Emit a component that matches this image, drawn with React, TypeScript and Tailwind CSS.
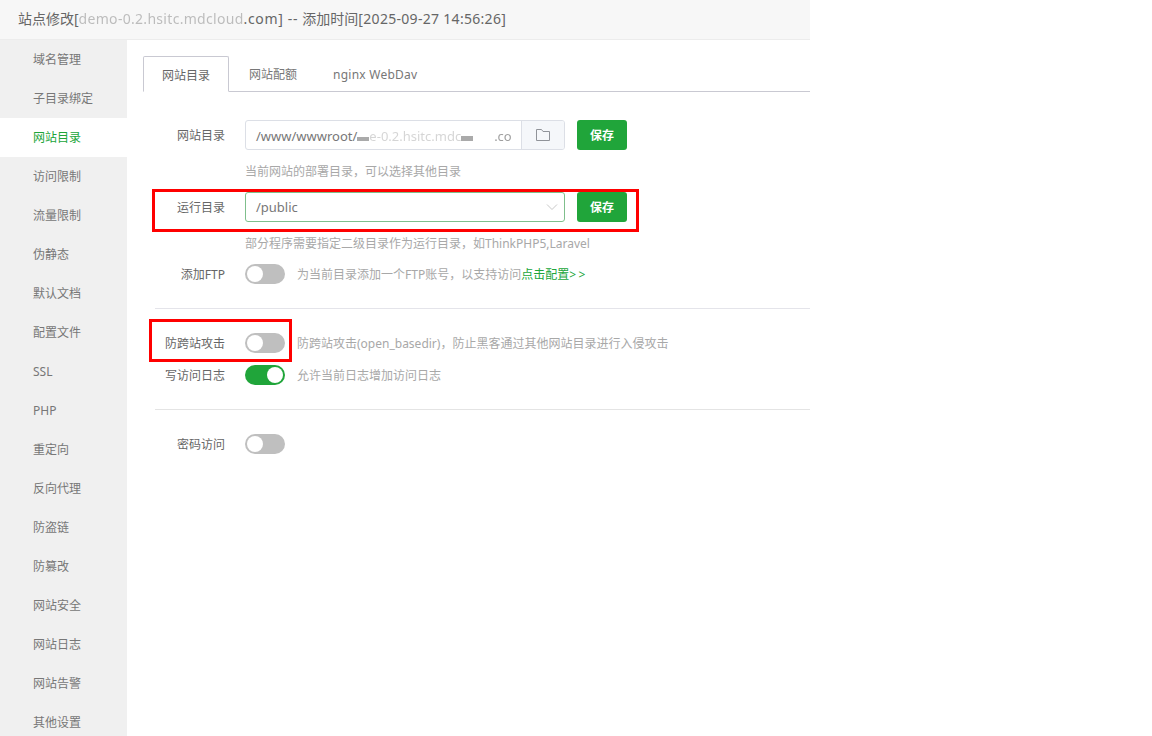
import { ReactNode } from "react";

const fontStack = 'font-["Noto_Sans","Noto_Sans_CJK_SC",sans-serif]';

const menuItems = [
  "域名管理", "子目录绑定", "网站目录", "访问限制", "流量限制", "伪静态",
  "默认文档", "配置文件", "SSL", "PHP", "重定向", "反向代理",
  "防盗链", "防篡改", "网站安全", "网站日志", "网站告警", "其他设置",
];

const Toggle = ({ on = false }: { on?: boolean }) => (
  <div className={`w-10 h-5 rounded-full p-[2px] flex shrink-0 ${on ? "bg-[#20a53a] justify-end" : "bg-[#bfbfbf] justify-start"}`}>
    <div className="w-4 h-4 rounded-full bg-white" />
  </div>
);

const SaveButton = () => (
  <button className="ml-3 w-[50px] h-[30px] pt-[2px] rounded-[3px] bg-[#20a53a] text-white text-xs font-bold shrink-0">保存</button>
);

const Label = ({ children }: { children: ReactNode }) => (
  <div className="w-[90px] pr-5 pt-[2px] text-right text-xs text-[#666] shrink-0 whitespace-nowrap">{children}</div>
);

const Hint = ({ children }: { children: ReactNode }) => (
  <div className="ml-[90px] text-xs leading-5 text-[#a8a8a8]">{children}</div>
);

const ToggleNote = ({ children }: { children: ReactNode }) => (
  <div className="ml-3 pt-[2px] text-xs text-[#a8a8a8] whitespace-nowrap">{children}</div>
);

const App = () => {
  return (
    <div className={`w-[1152px] h-[736px] overflow-hidden bg-white relative ${fontStack}`}>
      <div className="w-[810px]">
        {/* Header */}
        <div className="h-10 bg-[#f7f7f7] border-b border-[#ececec] pl-[18px] text-sm leading-[38px] text-[#666] whitespace-nowrap">
          站点修改[<span className="opacity-40 blur-[0.5px] tracking-[0.3px]">demo-0.2.hsitc.mdcloud</span>
          <span className="tracking-[0.65px]">.com] -- </span>添加时间<span className="tracking-[0.3px]">[2025-09-27 14:56:26]</span>
        </div>

        <div className="flex h-[696px]">
          {/* Sidebar */}
          <div className="w-[127px] bg-[#f0f0f0] shrink-0 overflow-hidden">
            {menuItems.map((item) => (
              <div
                key={item}
                className={`h-[39px] pl-[33px] text-xs leading-[39px] ${item === "网站目录" ? "bg-white text-[#20a53a]" : "text-[#777]"}`}
              >
                {item}
              </div>
            ))}
          </div>

          {/* Content */}
          <div className="flex-1 pl-4 pt-4">
            <div className="flex h-9 border-b border-[#c9c9d2] text-xs text-[#777]">
              <div className="w-[86px] h-9 border border-b-white border-[#c9c9d2] rounded-t-[2px] bg-white text-center leading-[37px] text-[#666]">网站目录</div>
              <div className="w-[88px] text-center leading-[37px]">网站配额</div>
              <div className="pl-4 leading-[37px] whitespace-nowrap tracking-[0.25px]">nginx WebDav</div>
            </div>

            <div className="pl-3 pt-7">
              <div className="flex items-center">
                <Label>网站目录</Label>
                <div className="w-80 h-[30px] flex border border-[#dcdfe6] rounded-[3px] overflow-hidden">
                  <div className="flex-1 pl-[10px] text-[13px] leading-[30px] text-[#777] whitespace-nowrap overflow-hidden">
                    /www/wwwroot/
                    <span className="inline-block w-3 h-1 bg-[#aaa] blur-[0.5px]" />
                    <span className="opacity-30 blur-[0.5px]">e-0.2.hsitc.mdc</span>
                    <span className="inline-block w-3 h-[5px] bg-[#aaa] blur-[0.5px]" />
                    <span className="inline-block w-[21px]" />
                    <span className="opacity-70">.co</span>
                  </div>
                  <div className="w-[43px] bg-[#f5f7fa] border-l border-[#dcdfe6] flex items-center justify-center">
                    <svg width="16" height="14" viewBox="0 0 16 14" fill="none" stroke="#909399" strokeWidth="1">
                      <path d="M1.5 12.5V1.5H6.5L8 3.5H14.5V12.5Z" />
                    </svg>
                  </div>
                </div>
                <SaveButton />
              </div>
              <div className="mt-3"><Hint>当前网站的部署目录，可以选择其他目录</Hint></div>

              <div className="flex items-center mt-[10px]">
                <Label>运行目录</Label>
                <div className="w-80 h-[30px] flex items-center justify-between border border-[#7fbf8c] rounded-[3px] pl-[10px] pr-[6px] text-[13px] text-[#777]">
                  <span className="pt-[2px]">/public</span>
                  <svg width="12" height="8" viewBox="0 0 12 8" fill="none" stroke="#c8c8c8" strokeWidth="1">
                    <path d="M1 1.5L6 6.5L11 1.5" />
                  </svg>
                </div>
                <SaveButton />
              </div>
              <div className="mt-3"><Hint>部分程序需要指定二级目录作为运行目录，如ThinkPHP5,Laravel</Hint></div>

              <div className="flex items-center mt-[10px]">
                <Label>添加FTP</Label>
                <Toggle />
                <ToggleNote>
                  为当前目录添加一个FTP账号，以支持访问<span className="text-[#20a53a]">点击配置<span className="tracking-[2.5px]">&gt;&gt;</span></span>
                </ToggleNote>
              </div>

              <div className="h-px bg-[#e4e4ea] mt-6" />

              <div className="flex items-center mt-6">
                <Label>防跨站攻击</Label>
                <Toggle />
                <ToggleNote>防跨站攻击(open_basedir)，防止黑客通过其他网站目录进行入侵攻击</ToggleNote>
              </div>
              <div className="flex items-center mt-3">
                <Label>写访问日志</Label>
                <Toggle on />
                <ToggleNote>允许当前日志增加访问日志</ToggleNote>
              </div>

              <div className="h-px bg-[#e4e4e4] mt-6" />

              <div className="flex items-center mt-6">
                <Label>密码访问</Label>
                <Toggle />
              </div>
            </div>
          </div>
        </div>
      </div>

      {/* Red annotation boxes */}
      <div className="absolute left-[152px] top-[189px] w-[487px] h-[43px] border-[3px] border-[#ff0000]" />
      <div className="absolute left-[149px] top-[319px] w-[143px] h-[43px] border-[3px] border-[#ff0000]" />
    </div>
  );
};

export default App;
